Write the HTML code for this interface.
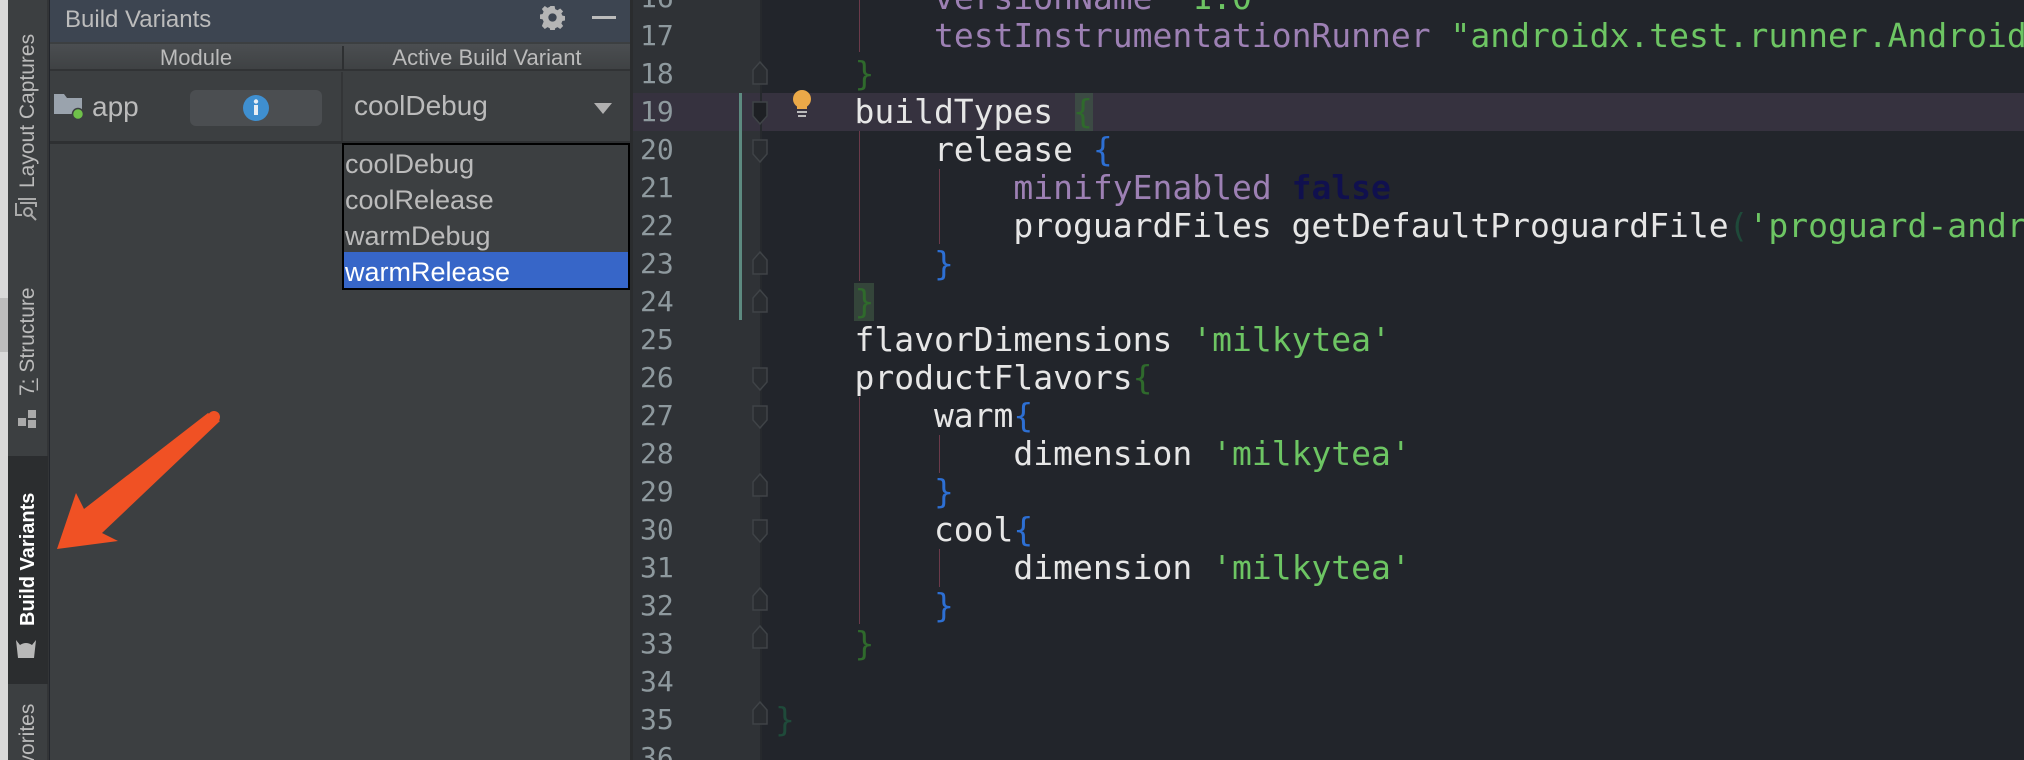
<!DOCTYPE html>
<html style="overflow:hidden;width:2024px;height:760px"><head><meta charset="utf-8"><style>
*{margin:0;padding:0;box-sizing:border-box}
html,body{overflow:hidden}
body{width:2024px;height:760px;background:#22252b;font-family:"Liberation Sans",sans-serif}
#root{position:relative;width:2024px;height:760px;overflow:hidden;background:#22252b}
.abs{position:absolute}
.vt{position:absolute;transform:rotate(-90deg);transform-origin:left top;white-space:nowrap;font-size:21px;color:#bbbbbb;line-height:24px}
.code{position:absolute;left:775px;font-family:"DejaVu Sans Mono","Liberation Mono",monospace;font-size:33px;line-height:38px;color:#e6e6e6;white-space:pre}
.ln{position:absolute;left:640px;width:44px;font-family:"DejaVu Sans Mono",monospace;font-size:28px;line-height:38px;color:#8e999e;text-align:left;white-space:pre}
.p{color:#9d80b4}.s{color:#6dc563}.b{color:#2d6fd3}.g{color:#2f6a2c}.k{color:#10104e;font-weight:bold}.pg{color:#1f4a3a}
</style></head><body><div id="root">
<div class="abs" style="left:0;top:0;width:8px;height:760px;background:#d9d9d9"></div>
<div class="abs" style="left:0;top:298px;width:8px;height:54px;background:#bdbdbd"></div>
<div class="abs" style="left:8px;top:0;width:41px;height:760px;background:#3c3f41;border-right:2px solid #333537"></div>
<div class="abs" style="left:8px;top:456px;width:40px;height:228px;background:#2b2d2f"></div>
<div class="vt" style="left:16px;top:188px">Layout Captures</div>
<svg class="abs" style="left:14px;top:197px" width="28" height="24" viewBox="0 0 28 24"><path d="M4 2h18M2 6v12h6M6 6h16v4" fill="none" stroke="#aaa" stroke-width="2"/><circle cx="14" cy="15" r="4" fill="none" stroke="#aaa" stroke-width="2"/><path d="M17 18l5 5" stroke="#aaa" stroke-width="2"/></svg>
<div class="vt" style="left:16px;top:396px">7̲: Structure</div>
<svg class="abs" style="left:18px;top:410px" width="20" height="20"><rect x="0" y="8" width="8" height="8" fill="#aaa"/><rect x="10" y="0" width="8" height="8" fill="#aaa"/><rect x="10" y="10" width="8" height="8" fill="#aaa"/></svg>
<div class="vt" style="left:16px;top:626px;color:#fff;font-weight:bold;font-size:20px">Build Variants</div>
<svg class="abs" style="left:14px;top:638px" width="24" height="20" viewBox="0 0 24 20"><path d="M2 2l4 5Q12 3 18 7l4-5-2 18H4z" fill="#b8b8b8"/></svg>
<div class="vt" style="left:16px;top:790px">Favorites</div>
<div class="abs" style="left:50px;top:0;width:580px;height:760px;background:#3c3f41"></div>
<div class="abs" style="left:50px;top:0;width:580px;height:42px;background:#3d4551"></div>
<div class="abs" style="left:65px;top:6px;font-size:24px;color:#bcbcbc">Build Variants</div>
<svg class="abs" style="left:540px;top:5px" width="25" height="25" viewBox="0 0 24 24"><path fill="#b5b5b5" d="M10 1h4l.6 3 2.2 1 2.6-1.7 2.8 2.8L20.5 8l1 2.2 3 .6v4l-3 .6-1 2.2 1.7 2.6-2.8 2.8-2.6-1.7-2.2 1-.6 3h-4l-.6-3-2.2-1-2.6 1.7-2.8-2.8L3.5 16l-1-2.2-3-.6v-4l3-.6 1-2.2L1.8 3.8 4.6 1 7.2 2.7 9.4 1.7z"/><circle cx="12" cy="12" r="4" fill="#3d4551"/></svg>
<div class="abs" style="left:592px;top:16px;width:24px;height:3px;background:#bcbcbc"></div>
<div class="abs" style="left:50px;top:44px;width:580px;height:27px;background:linear-gradient(#4b4e51,#3f4244);border-bottom:2px solid #313335"></div>
<div class="abs" style="left:342px;top:46px;width:2px;height:24px;background:#2e3032"></div>
<div class="abs" style="left:50px;top:45px;width:292px;text-align:center;font-size:22px;color:#bbb">Module</div>
<div class="abs" style="left:344px;top:45px;width:286px;text-align:center;font-size:22px;color:#bbb">Active Build Variant</div>
<div class="abs" style="left:341px;top:72px;width:2px;height:70px;background:#333537"></div>
<div class="abs" style="left:50px;top:141px;width:580px;height:3px;background:#2e3032"></div>
<svg class="abs" style="left:54px;top:94px" width="32" height="26"><path d="M0 0h10l3 4h15v16H0z" fill="#9aa3ad"/><circle cx="24" cy="20" r="5.5" fill="#6fc14a" stroke="#3c3f41" stroke-width="1.5"/></svg>
<div class="abs" style="left:92px;top:91px;font-size:28px;color:#bbb">app</div>
<div class="abs" style="left:190px;top:90px;width:132px;height:36px;border-radius:6px;background:#4b4e51"></div>
<svg class="abs" style="left:242px;top:94px" width="28" height="28"><circle cx="14" cy="14" r="13" fill="#3f8fd0"/><rect x="12" y="11" width="4" height="10" fill="#e8eef4"/><circle cx="14" cy="7.5" r="2.2" fill="#e8eef4"/></svg>
<div class="abs" style="left:354px;top:90px;font-size:28px;color:#bbb">coolDebug</div>
<svg class="abs" style="left:594px;top:103px" width="18" height="11"><path d="M0 0h18L9 11z" fill="#b0b0b0"/></svg>
<div class="abs" style="left:342px;top:143px;width:288px;height:147px;background:#3c3f41;border:2px solid #000"></div>
<div class="abs" style="left:344px;top:252px;width:284px;height:36px;background:#3766c8"></div>
<div class="abs" style="left:345px;top:146px;font-size:27px;line-height:36px;color:#bbb">coolDebug<br>coolRelease<br>warmDebug<br><span style="color:#fff">warmRelease</span></div>
<svg class="abs" style="left:0;top:0" width="260" height="600"><path d="M208 413L220 421L102 533L118 541L57 549L76 493L84 509Z" fill="#f05124"/><circle cx="214" cy="417" r="6" fill="#f05124"/></svg>
<div class="abs" style="left:630px;top:0;width:3px;height:760px;background:#2a2c2e"></div>
<div class="abs" style="left:633px;top:0;width:128px;height:760px;background:#2f3236"></div>
<div class="abs" style="left:633px;top:93px;width:1391px;height:38px;background:#36323f"></div>
<div class="abs" style="left:760px;top:0;width:2px;height:760px;background:#26292d"></div>
<div class="abs" style="left:739px;top:93px;width:3px;height:227px;background:#5d8a80"></div>
<svg class="abs" style="left:791px;top:90px" width="24" height="34"><ellipse cx="11" cy="9" rx="9" ry="9" fill="#eba948"/><rect x="6" y="14" width="10" height="5" fill="#eba948"/><rect x="6" y="21" width="10" height="2" fill="#bbb"/><rect x="7" y="25" width="8" height="2" fill="#bbb"/></svg>
<svg class="abs" style="left:748px;top:0" width="26" height="760" fill="#2a2d31" stroke="#3f4347" stroke-width="1.5">
<path d="M5 70l7-8 7 8v14H5z"/><path d="M5 102h14v14l-7 8-7-8z" fill="#1e2024"/><path d="M5 140h14v14l-7 8-7-8z"/><path d="M5 260l7-8 7 8v14H5z"/><path d="M5 298l7-8 7 8v14H5z"/><path d="M5 368h14v14l-7 8-7-8z"/><path d="M5 406h14v14l-7 8-7-8z"/><path d="M5 482l7-8 7 8v14H5z"/><path d="M5 520h14v14l-7 8-7-8z"/><path d="M5 596l7-8 7 8v14H5z"/><path d="M5 634l7-8 7 8v14H5z"/><path d="M5 710l7-8 7 8v14H5z"/>
</svg>
<div class="abs" style="left:859px;top:0;width:1px;height:52px;background:#6b3a4a"></div>
<div class="abs" style="left:859px;top:131px;width:1px;height:150px;background:#6b3a4a"></div>
<div class="abs" style="left:939px;top:169px;width:1px;height:75px;background:#6b3a4a"></div>
<div class="abs" style="left:859px;top:397px;width:1px;height:227px;background:#6b3a4a"></div>
<div class="abs" style="left:939px;top:435px;width:1px;height:38px;background:#6b3a4a"></div>
<div class="abs" style="left:939px;top:549px;width:1px;height:38px;background:#6b3a4a"></div>
<div class="abs" style="left:854px;top:283px;width:20px;height:38px;background:#34453a"></div>
<div class="abs" style="left:1075px;top:93px;width:18px;height:38px;background:#3c4a44"></div>
<div class="ln" style="top:-21px">16
17
18
19
20
21
22
23
24
25
26
27
28
29
30
31
32
33
34
35
36</div>
<div class="code" style="top:-21px">        <span class="p">versionName</span> <span class="s">"1.0"</span>
        <span class="p">testInstrumentationRunner</span> <span class="s">"androidx.test.runner.AndroidJ</span>
    <span class="g">}</span>
    buildTypes <span class="g">{</span>
        release <span class="b">{</span>
            <span class="p">minifyEnabled</span> <span class="k">false</span>
            proguardFiles getDefaultProguardFile<span class="pg">(</span><span class="s">'proguard-andro</span>
        <span class="b">}</span>
    <span class="g">}</span>
    flavorDimensions <span class="s">'milkytea'</span>
    productFlavors<span class="g">{</span>
        warm<span class="b">{</span>
            dimension <span class="s">'milkytea'</span>
        <span class="b">}</span>
        cool<span class="b">{</span>
            dimension <span class="s">'milkytea'</span>
        <span class="b">}</span>
    <span class="g">}</span>

<span class="pg">}</span></div>
</div></body></html>
